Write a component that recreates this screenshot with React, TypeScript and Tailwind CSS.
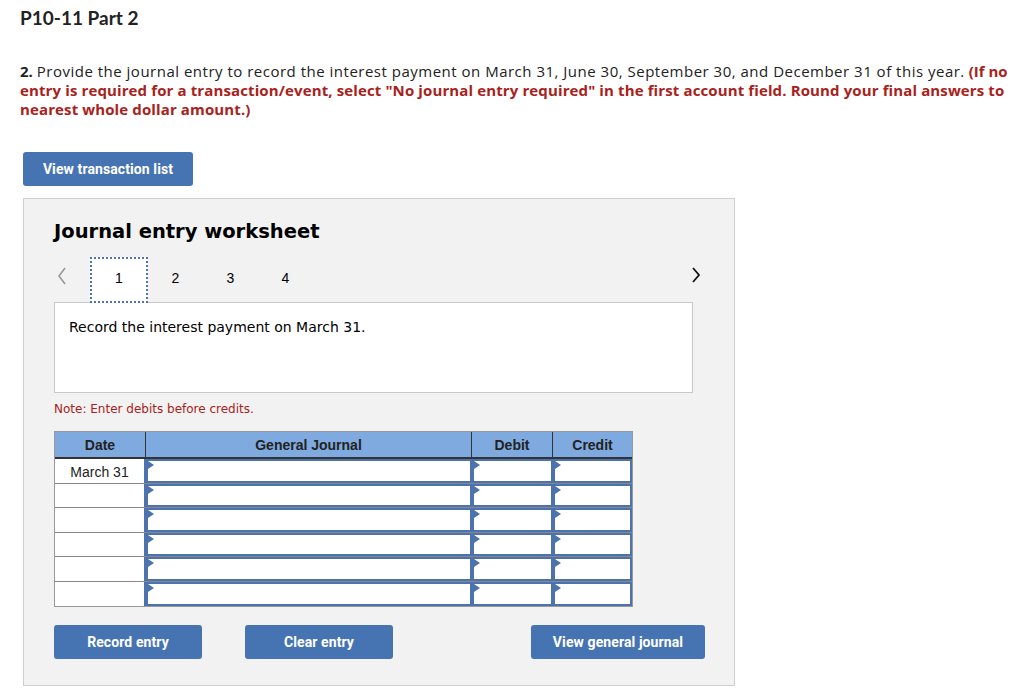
import React from 'react';

const ROWS = ['March 31', '', '', '', '', ''];

const Cell = ({ w }: { w: string }) => (
  <div className={`relative ${w} h-full border-2 border-[#4c73ad] bg-white`}>
    <span className="absolute left-0 top-0 w-0 h-0 border-y-[4px] border-y-transparent border-l-[6px] border-l-[#4c73ad]" />
  </div>
);

const btn = 'h-[34px] rounded-[3px] bg-[#4674b3] text-white text-[14px] font-bold tracking-[0.1px]';

export default function App() {
  return (
    <div className="w-[1024px] h-[691px] bg-white overflow-hidden text-[#222]" style={{ fontFamily: 'Lato, "Open Sans", sans-serif' }}>
      <div className="pl-5 pt-[6px]">
        <h1 className="text-[19px] font-bold leading-[24px] text-[#222]">P10-11 Part 2</h1>
        <div className="mt-[32px] text-[15px] whitespace-nowrap" style={{ fontFamily: '"Open Sans", Lato, sans-serif' }}>
          <div className="h-[19px] leading-[19px]">
            <span className="font-bold">2.</span>{' '}
            <span className="tracking-[0.5px]">Provide the journal entry to record the interest payment on March 31, June 30, September 30, and December 31 of this year.</span>{' '}
            <span className="font-bold text-[#a8221c]">(If no</span>
          </div>
          <div className="h-[19px] leading-[19px] font-bold text-[#a8221c] tracking-[0.12px]">
            entry is required for a transaction/event, select "No journal entry required" in the first account field. Round your final answers to
          </div>
          <div className="h-[19px] leading-[19px] font-bold text-[#a8221c] tracking-[0.12px]">nearest whole dollar amount.)</div>
        </div>
      </div>

      <div className="pl-[23px] mt-[33px]" style={{ fontFamily: 'Roboto, "Liberation Sans", sans-serif' }}>
        <button className={`w-[170px] ${btn}`}>View transaction list</button>

        <div className="mt-[12px] w-[712px] h-[488px] border border-[#cfcfcf] bg-[#f2f2f2] pl-[30px] pr-[41px]">
          <h2 className="mt-[20px] text-[19.5px] font-bold leading-[26px] text-black" style={{ fontFamily: '"DejaVu Sans", Verdana, sans-serif' }}>
            Journal entry worksheet
          </h2>

          <div className="mt-[12px] flex items-center h-[45px]" style={{ fontFamily: '"Liberation Sans", Arial, sans-serif' }}>
            <svg width="10" height="18" viewBox="0 0 10 18" className="ml-[3px] mb-[8px]">
              <path d="M8 1 L2 9 L8 17" fill="none" stroke="#999" strokeWidth="1.6" />
            </svg>
            <div className="ml-[23px] w-[58px] h-[46px] bg-white border-2 border-dotted border-[#4c73ad] flex items-center justify-center text-[14px] text-black pb-[3px]">1</div>
            <div className="w-[55px] text-center text-[14px] text-black mb-[3px]">2</div>
            <div className="w-[55px] text-center text-[14px] text-black mb-[3px]">3</div>
            <div className="w-[55px] text-center text-[14px] text-black mb-[3px]">4</div>
            <svg width="10" height="16" viewBox="0 0 10 16" className="ml-auto mr-[-8px] mb-[9px]">
              <path d="M2 1 L8 8 L2 15" fill="none" stroke="#111" strokeWidth="1.8" />
            </svg>
          </div>

          <div className="w-[639px] h-[91px] bg-white border border-[#c8c8c8] px-[14px] pt-[14px] text-[14px] text-black" style={{ fontFamily: '"DejaVu Sans", Verdana, sans-serif' }}>
            Record the interest payment on March 31.
          </div>

          <p className="mt-[8px] text-[12px] leading-[16px] text-[#a8221c]" style={{ fontFamily: '"DejaVu Sans", Verdana, sans-serif' }}>
            Note: Enter debits before credits.
          </p>

          <div className="mt-[14px] w-[579px] border border-[#999] bg-white" style={{ fontFamily: '"Liberation Sans", Arial, sans-serif' }}>
            <div className="flex h-[27px] bg-[#7eaadf] border-b-2 border-[#333] text-[14px] font-bold text-[#222]">
              <div className="w-[91px] flex items-center justify-center border-r border-[#333] pt-[2px]">Date</div>
              <div className="w-[326px] flex items-center justify-center border-r border-[#333] pt-[2px]">General Journal</div>
              <div className="w-[81px] flex items-center justify-center border-r border-[#333] pt-[2px]">Debit</div>
              <div className="flex-1 flex items-center justify-center pt-[2px]">Credit</div>
            </div>
            {ROWS.map((d, i) => (
              <div key={i} className={`flex h-[24.5px] ${i < ROWS.length - 1 ? 'border-b border-[#888]' : ''}`}>
                <div className="w-[91px] flex items-center justify-center text-[14px] text-[#222] border-r-2 border-[#4c73ad] pt-[3px]">{d}</div>
                <Cell w="w-[326px]" />
                <Cell w="w-[81px]" />
                <Cell w="flex-1" />
              </div>
            ))}
          </div>

          <div className="mt-[18px] flex">
            <button className={`w-[148px] ${btn}`}>Record entry</button>
            <button className={`ml-[43px] w-[148px] ${btn}`}>Clear entry</button>
            <button className={`ml-auto mr-[-12px] w-[174px] ${btn}`}>View general journal</button>
          </div>
        </div>
      </div>
    </div>
  );
}
